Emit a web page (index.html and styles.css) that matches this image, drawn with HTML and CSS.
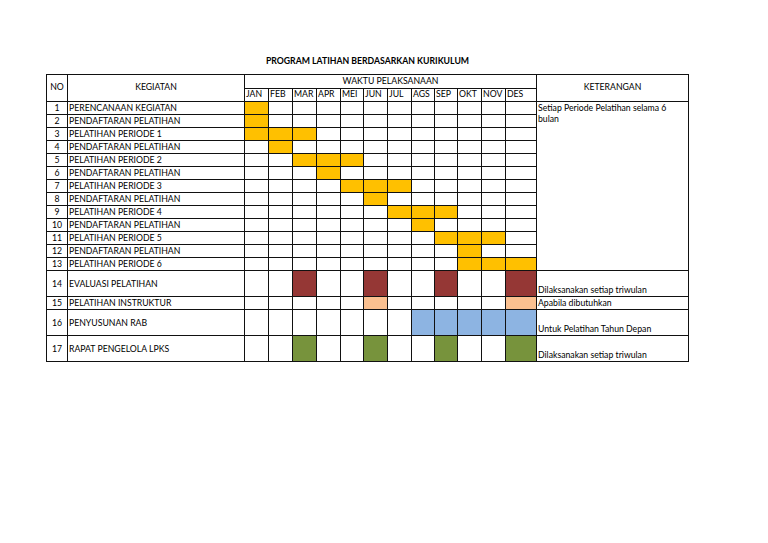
FILE: index.html
```html
<!DOCTYPE html>
<html lang="id">
<head>
<meta charset="utf-8">
<title>Program Latihan Berdasarkan Kurikulum</title>
<link rel="stylesheet" href="styles.css">
</head>
<body>
<div class="page">
  <div class="title">PROGRAM LATIHAN BERDASARKAN KURIKULUM</div>
  <div class="sheet">
    <div class="hd span2">NO</div>
    <div class="hd span2">KEGIATAN</div>
    <div class="hd waktu">WAKTU PELAKSANAAN</div>
    <div class="hd span2">KETERANGAN</div>
    <div class="m">JAN</div><div class="m">FEB</div><div class="m">MAR</div><div class="m">APR</div><div class="m">MEI</div><div class="m">JUN</div><div class="m">JUL</div><div class="m">AGS</div><div class="m">SEP</div><div class="m">OKT</div><div class="m">NOV</div><div class="m">DES</div>

    <div class="note">Setiap Periode Pelatihan selama 6<br>bulan</div>

    <div class="no">1</div><div class="keg">PERENCANAAN KEGIATAN</div>
    <div class="y"></div><div></div><div></div><div></div><div></div><div></div><div></div><div></div><div></div><div></div><div></div><div></div>

    <div class="no">2</div><div class="keg">PENDAFTARAN PELATIHAN</div>
    <div class="y"></div><div></div><div></div><div></div><div></div><div></div><div></div><div></div><div></div><div></div><div></div><div></div>

    <div class="no">3</div><div class="keg">PELATIHAN PERIODE 1</div>
    <div class="y"></div><div class="y"></div><div class="y"></div><div></div><div></div><div></div><div></div><div></div><div></div><div></div><div></div><div></div>

    <div class="no">4</div><div class="keg">PENDAFTARAN PELATIHAN</div>
    <div></div><div class="y"></div><div></div><div></div><div></div><div></div><div></div><div></div><div></div><div></div><div></div><div></div>

    <div class="no">5</div><div class="keg">PELATIHAN PERIODE 2</div>
    <div></div><div></div><div class="y"></div><div class="y"></div><div class="y"></div><div></div><div></div><div></div><div></div><div></div><div></div><div></div>

    <div class="no">6</div><div class="keg">PENDAFTARAN PELATIHAN</div>
    <div></div><div></div><div></div><div class="y"></div><div></div><div></div><div></div><div></div><div></div><div></div><div></div><div></div>

    <div class="no">7</div><div class="keg">PELATIHAN PERIODE 3</div>
    <div></div><div></div><div></div><div></div><div class="y"></div><div class="y"></div><div class="y"></div><div></div><div></div><div></div><div></div><div></div>

    <div class="no">8</div><div class="keg">PENDAFTARAN PELATIHAN</div>
    <div></div><div></div><div></div><div></div><div></div><div class="y"></div><div></div><div></div><div></div><div></div><div></div><div></div>

    <div class="no">9</div><div class="keg">PELATIHAN PERIODE 4</div>
    <div></div><div></div><div></div><div></div><div></div><div></div><div class="y"></div><div class="y"></div><div class="y"></div><div></div><div></div><div></div>

    <div class="no">10</div><div class="keg">PENDAFTARAN PELATIHAN</div>
    <div></div><div></div><div></div><div></div><div></div><div></div><div></div><div class="y"></div><div></div><div></div><div></div><div></div>

    <div class="no">11</div><div class="keg">PELATIHAN PERIODE 5</div>
    <div></div><div></div><div></div><div></div><div></div><div></div><div></div><div></div><div class="y"></div><div class="y"></div><div class="y"></div><div></div>

    <div class="no">12</div><div class="keg">PENDAFTARAN PELATIHAN</div>
    <div></div><div></div><div></div><div></div><div></div><div></div><div></div><div></div><div></div><div class="y"></div><div></div><div></div>

    <div class="no">13</div><div class="keg">PELATIHAN PERIODE 6</div>
    <div></div><div></div><div></div><div></div><div></div><div></div><div></div><div></div><div></div><div class="y"></div><div class="y"></div><div class="y"></div>

    <div class="no tall">14</div><div class="keg tall">EVALUASI PELATIHAN</div>
    <div></div><div></div><div class="r"></div><div></div><div></div><div class="r"></div><div></div><div></div><div class="r"></div><div></div><div></div><div class="r"></div>
    <div class="ket">Dilaksanakan setiap triwulan</div>

    <div class="no">15</div><div class="keg">PELATIHAN INSTRUKTUR</div>
    <div></div><div></div><div></div><div></div><div></div><div class="p"></div><div></div><div></div><div></div><div></div><div></div><div class="p"></div>
    <div class="ket">Apabila dibutuhkan</div>

    <div class="no tall">16</div><div class="keg tall">PENYUSUNAN RAB</div>
    <div></div><div></div><div></div><div></div><div></div><div></div><div></div><div class="b"></div><div class="b"></div><div class="b"></div><div class="b"></div><div class="b"></div>
    <div class="ket">Untuk Pelatihan Tahun Depan</div>

    <div class="no tall">17</div><div class="keg tall">RAPAT PENGELOLA LPKS</div>
    <div></div><div></div><div class="g"></div><div></div><div></div><div class="g"></div><div></div><div></div><div class="g"></div><div></div><div></div><div class="g"></div>
    <div class="ket">Dilaksanakan setiap triwulan</div>
  </div>
</div>
</body>
</html>
```

FILE: styles.css
```css
html, body {
  margin: 0;
  padding: 0;
  background: #fff;
}

body {
  font-family: Lato, "Liberation Sans", sans-serif;
  font-size: 8.7px;
  color: #000;
}

.page {
  padding: 54px 0 0 46px;
}

.title {
  width: 643px;
  height: 14px;
  line-height: 14px;
  margin-bottom: 6px;
  text-align: center;
  font-weight: bold;
}

.sheet {
  display: grid;
  width: max-content;
  grid-template-columns: 21px 177px 24px 24px 24px 24px 23px 24px 24px 23px 23px 24px 24px 31px 152px;
  grid-template-rows: 14px 13px repeat(13, 13px) 26px 13px 26px 26px;
  border-left: 1px solid #111;
  border-top: 1px solid #111;
}

.sheet > div {
  box-sizing: border-box;
  border-right: 1px solid #111;
  border-bottom: 1px solid #111;
  overflow: hidden;
  white-space: nowrap;
  line-height: 11px;
}

.hd {
  display: flex;
  align-items: center;
  justify-content: center;
  padding-bottom: 4px;
}

.span2 {
  grid-row: span 2;
}

.waktu {
  grid-column: span 12;
  padding-bottom: 2px;
}

.m {
  padding-left: 1px;
  padding-bottom: 3px;
  display: flex;
  align-items: center;
}

.no {
  display: flex;
  align-items: center;
  justify-content: center;
  padding-bottom: 2px;
}

.keg {
  display: flex;
  align-items: center;
  padding-left: 1px;
  padding-bottom: 2px;
}

.tall {
  padding-bottom: 1px;
}

.ket {
  display: flex;
  align-items: flex-end;
  padding-left: 1px;
  padding-bottom: 1px;
}

.note {
  grid-column: 15;
  grid-row: 3 / span 13;
  white-space: normal;
  line-height: 10px;
  padding-left: 1px;
}

.y { background: #ffc000; }
.r { background: #953735; }
.p { background: #fac090; }
.b { background: #8db4e2; }
.g { background: #77933c; }
```
